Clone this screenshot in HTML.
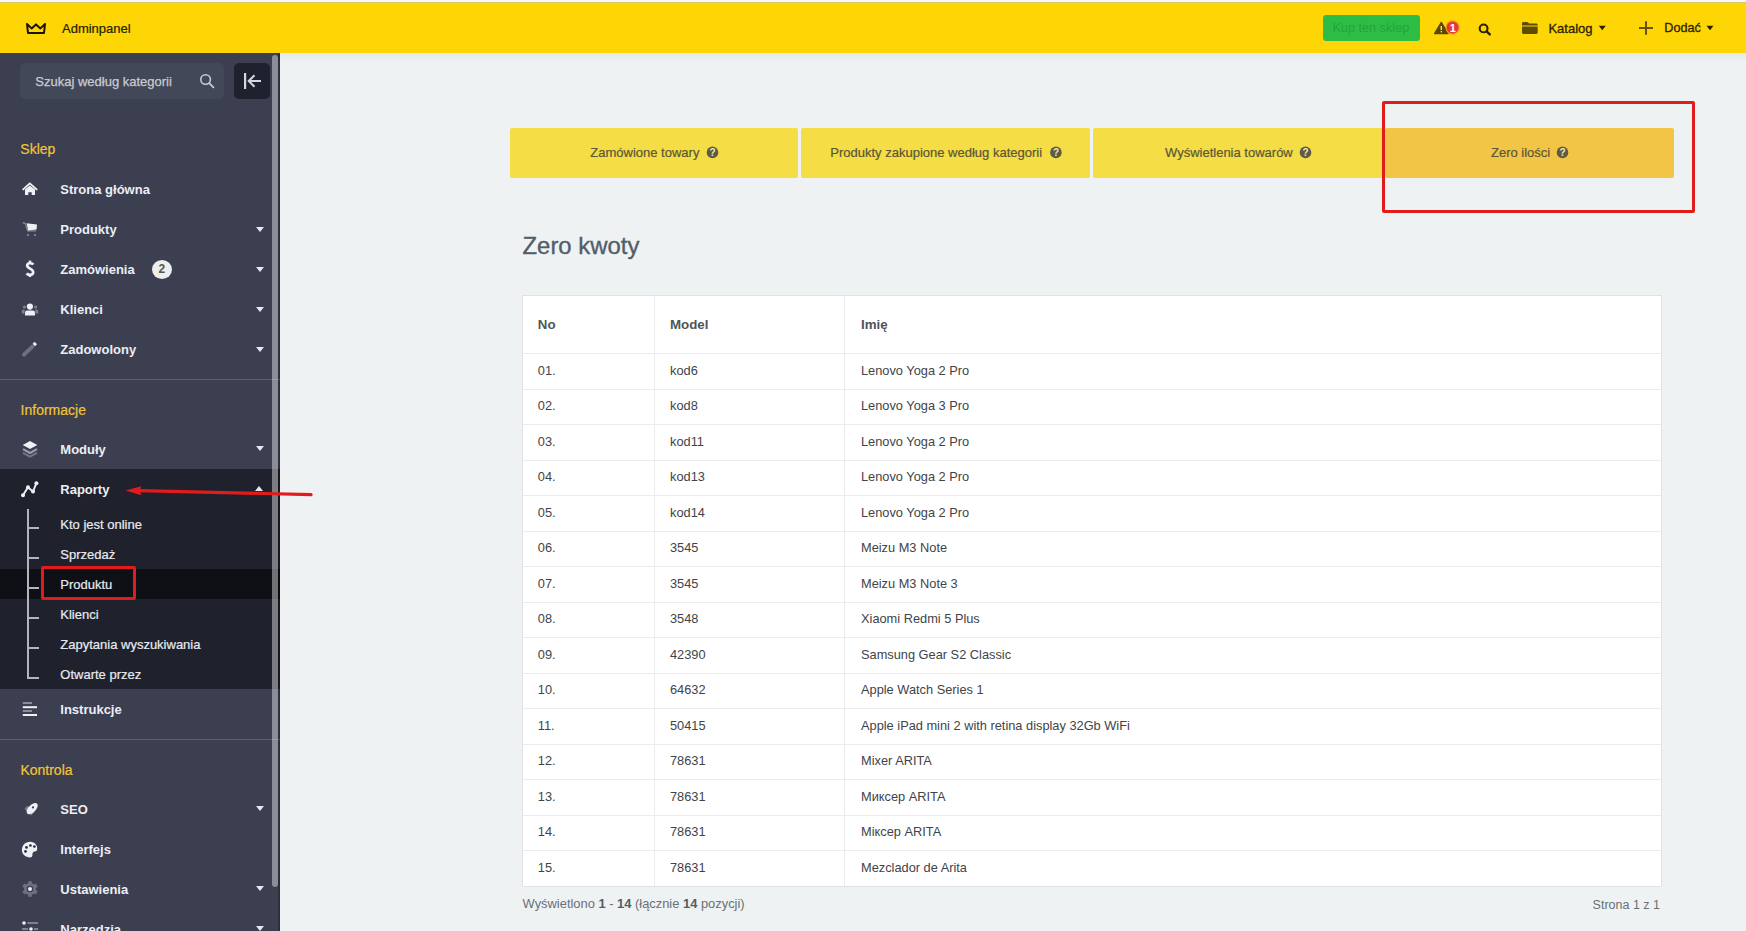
<!DOCTYPE html>
<html><head><meta charset="utf-8">
<style>
*{box-sizing:border-box;margin:0;padding:0}
html,body{width:1746px;height:931px;overflow:hidden;background:#eef2f3;font-family:"Liberation Sans",sans-serif}
body{position:relative}
.a{position:absolute;white-space:nowrap;line-height:1}
.r{position:absolute}
.caret{position:absolute;width:0;height:0;border-left:4.5px solid transparent;border-right:4.5px solid transparent;border-top:5px solid #e6e8ee}
.caretu{position:absolute;width:0;height:0;border-left:4.5px solid transparent;border-right:4.5px solid transparent;border-bottom:5px solid #e6e8ee}
svg{position:absolute;overflow:visible}
</style></head><body>
<div class="r" style="left:0;top:0;width:1746px;height:2px;background:#f9f9f3"></div>
<div class="r" style="left:0;top:2px;width:1746px;height:1px;background:#dac870"></div>
<div class="r" style="left:0;top:3px;width:1746px;height:50px;background:#fed605"></div>
<svg style="left:0;top:0" width="60" height="50"><path d="M27 24 L31.6 28.4 L36 24.4 L40.4 28.4 L45 24 L44 32.9 L28 32.9 Z" fill="none" stroke="#1d1400" stroke-width="2" stroke-linejoin="round"/></svg>
<div class="a" style="left:62px;top:21.60px;font-size:13px;color:#241c00;font-weight:normal;-webkit-text-stroke:0.2px #241c00">Adminpanel</div>
<div class="r" style="left:1323px;top:15px;width:97px;height:25.5px;background:#2dbd45;border-radius:3px"></div>
<div class="a" style="left:1332.4px;top:21.55px;font-size:12.7px;color:#26a23c;font-weight:normal;">Kup ten sklep</div>
<svg style="left:0;top:0" width="1746" height="53">
<path d="M1441.3 22.3 L1448.2 33.6 L1434.5 33.6 Z" fill="#5a4800" stroke="#5a4800" stroke-width="1.2" stroke-linejoin="round"/>
<rect x="1440.6" y="26" width="1.4" height="4" fill="#f6e27a"/><rect x="1440.6" y="31" width="1.4" height="1.4" fill="#f6e27a"/>
<circle cx="1452.6" cy="27.5" r="7.2" fill="#f59f1c"/>
<circle cx="1452.6" cy="27.5" r="6" fill="#e5373a"/>
<text x="1452.8" y="31.6" font-family="Liberation Sans" font-size="11" font-weight="bold" fill="#fff" text-anchor="middle">1</text>
<circle cx="1483.6" cy="28.4" r="3.9" fill="none" stroke="#2a2100" stroke-width="2.1"/>
<line x1="1486.6" y1="31.4" x2="1489.8" y2="34.4" stroke="#2a2100" stroke-width="2.4" stroke-linecap="round"/>
<path d="M1522 23.4 Q1522 22 1523.4 22 H1527.6 L1529.2 23.6 H1536.3 Q1537.7 23.6 1537.7 25 V25.6 H1522 Z" fill="#5f4c00"/>
<path d="M1522 26.4 H1537.7 V32.6 Q1537.7 34 1536.3 34 H1523.4 Q1522 34 1522 32.6 Z" fill="#5f4c00"/>
<path d="M1598.8 25.8 H1605.8 L1602.3 30.2 Z" fill="#2a2100"/>
<line x1="1639" y1="28" x2="1653" y2="28" stroke="#5f4c00" stroke-width="1.9"/>
<line x1="1646" y1="21.3" x2="1646" y2="34.7" stroke="#5f4c00" stroke-width="1.9"/>
<path d="M1706.5 25.8 H1713.5 L1710 30.2 Z" fill="#2a2100"/>
</svg>
<div class="a" style="left:1548.4px;top:21.70px;font-size:13px;color:#2a2100;font-weight:normal;-webkit-text-stroke:0.3px #2a2100">Katalog</div>
<div class="a" style="left:1664.3px;top:22.03px;font-size:12.6px;color:#2a2100;font-weight:normal;-webkit-text-stroke:0.3px #2a2100">Dodać</div>
<div class="r" style="left:280px;top:53px;width:1466px;height:10px;background:linear-gradient(rgba(0,0,0,0.035),rgba(0,0,0,0))"></div>
<div class="r" style="left:0;top:53px;width:280px;height:878px;background:#3b3f50"></div>
<div class="r" style="left:0;top:469px;width:280px;height:220px;background:#1f222d"></div>
<div class="r" style="left:0;top:569px;width:280px;height:30px;background:#0e1016"></div>
<div class="r" style="left:278px;top:53px;width:2px;height:878px;background:rgba(0,0,0,0.25)"></div>
<div class="r" style="left:272px;top:55px;width:6px;height:832px;background:rgba(255,255,255,0.41);border-radius:3px"></div>
<div class="r" style="left:0;top:379px;width:280px;height:1px;background:rgba(255,255,255,0.17)"></div>
<div class="r" style="left:0;top:739px;width:280px;height:1px;background:rgba(255,255,255,0.17)"></div>
<div class="r" style="left:20px;top:63px;width:204px;height:36px;background:#434859;border-radius:5px"></div>
<div class="a" style="left:35.3px;top:75.20px;font-size:13px;color:#c8cbd3;font-weight:normal;-webkit-text-stroke:0.25px #c8cbd3">Szukaj według kategorii</div>
<div class="r" style="left:234px;top:63px;width:36px;height:36px;background:#1e212e;border-radius:5px"></div>
<svg style="left:0;top:0" width="280" height="931">
<circle cx="205.6" cy="79.5" r="4.8" fill="none" stroke="#c8cad2" stroke-width="1.6"/>
<line x1="209.2" y1="83.1" x2="213.4" y2="87.3" stroke="#c8cad2" stroke-width="1.8" stroke-linecap="round"/>
<rect x="244" y="73" width="2.2" height="16" fill="#d6d8df"/>
<line x1="248.5" y1="81" x2="261" y2="81" stroke="#d6d8df" stroke-width="2"/>
<path d="M254.5 75.2 L248.7 81 L254.5 86.8" fill="none" stroke="#d6d8df" stroke-width="2"/>
</svg>
<div class="a" style="left:20.3px;top:142.05px;font-size:14px;color:#f0c53c;font-weight:normal;-webkit-text-stroke:0.2px #f0c53c">Sklep</div>
<div class="a" style="left:60.3px;top:183.30px;font-size:13px;color:#eceef5;font-weight:bold;">Strona główna</div>
<div class="a" style="left:60.3px;top:223.30px;font-size:13px;color:#eceef5;font-weight:bold;">Produkty</div>
<div class="caret" style="left:256px;top:226.5px"></div>
<div class="a" style="left:60.3px;top:263.30px;font-size:13px;color:#eceef5;font-weight:bold;">Zamówienia</div>
<div class="caret" style="left:256px;top:266.5px"></div>
<div class="a" style="left:60.3px;top:303.30px;font-size:13px;color:#eceef5;font-weight:bold;">Klienci</div>
<div class="caret" style="left:256px;top:306.5px"></div>
<div class="a" style="left:60.3px;top:343.30px;font-size:13px;color:#eceef5;font-weight:bold;">Zadowolony</div>
<div class="caret" style="left:256px;top:346.5px"></div>
<div class="a" style="left:60.3px;top:443.20px;font-size:13px;color:#eceef5;font-weight:bold;">Moduły</div>
<div class="caret" style="left:256px;top:446.4px"></div>
<div class="a" style="left:60.3px;top:483.40px;font-size:13px;color:#eceef5;font-weight:bold;">Raporty</div>
<div class="a" style="left:60.3px;top:702.60px;font-size:13px;color:#eceef5;font-weight:bold;">Instrukcje</div>
<div class="a" style="left:60.3px;top:803.20px;font-size:13px;color:#eceef5;font-weight:bold;">SEO</div>
<div class="caret" style="left:256px;top:806.4px"></div>
<div class="a" style="left:60.3px;top:843.20px;font-size:13px;color:#eceef5;font-weight:bold;">Interfejs</div>
<div class="a" style="left:60.3px;top:883.20px;font-size:13px;color:#eceef5;font-weight:bold;">Ustawienia</div>
<div class="caret" style="left:256px;top:886.4px"></div>
<div class="a" style="left:60.3px;top:923.20px;font-size:13px;color:#eceef5;font-weight:bold;">Narzędzia</div>
<div class="caret" style="left:256px;top:926.4px"></div>
<div class="caretu" style="left:255px;top:486px"></div>
<div class="a" style="left:20.6px;top:403.25px;font-size:14px;color:#f0c53c;font-weight:normal;-webkit-text-stroke:0.2px #f0c53c">Informacje</div>
<div class="a" style="left:20.4px;top:763.05px;font-size:14px;color:#f0c53c;font-weight:normal;-webkit-text-stroke:0.2px #f0c53c">Kontrola</div>
<div class="r" style="left:152px;top:259.5px;width:20px;height:19px;border-radius:50%;background:#eeeeee"></div>
<div class="a" style="left:158.6px;top:263.44px;font-size:12px;color:#555555;font-weight:bold;">2</div>
<div class="a" style="left:60.3px;top:517.90px;font-size:13px;color:#e8eaf0;font-weight:normal;-webkit-text-stroke:0.2px #e8eaf0">Kto jest online</div>
<div class="r" style="left:29px;top:527px;width:10px;height:2px;background:#b3b6c0"></div>
<div class="a" style="left:60.3px;top:547.90px;font-size:13px;color:#e8eaf0;font-weight:normal;-webkit-text-stroke:0.2px #e8eaf0">Sprzedaż</div>
<div class="r" style="left:29px;top:557px;width:10px;height:2px;background:#b3b6c0"></div>
<div class="a" style="left:60.3px;top:577.90px;font-size:13px;color:#e8eaf0;font-weight:normal;-webkit-text-stroke:0.2px #e8eaf0">Produktu</div>
<div class="r" style="left:29px;top:587px;width:10px;height:2px;background:#b3b6c0"></div>
<div class="a" style="left:60.3px;top:607.90px;font-size:13px;color:#e8eaf0;font-weight:normal;-webkit-text-stroke:0.2px #e8eaf0">Klienci</div>
<div class="r" style="left:29px;top:617px;width:10px;height:2px;background:#b3b6c0"></div>
<div class="a" style="left:60.3px;top:637.90px;font-size:13px;color:#e8eaf0;font-weight:normal;-webkit-text-stroke:0.2px #e8eaf0">Zapytania wyszukiwania</div>
<div class="r" style="left:29px;top:647px;width:10px;height:2px;background:#b3b6c0"></div>
<div class="a" style="left:60.3px;top:667.90px;font-size:13px;color:#e8eaf0;font-weight:normal;-webkit-text-stroke:0.2px #e8eaf0">Otwarte przez</div>
<div class="r" style="left:29px;top:677px;width:10px;height:2px;background:#b3b6c0"></div>
<div class="r" style="left:27px;top:509px;width:2px;height:170px;background:#b3b6c0"></div>
<div class="r" style="left:41px;top:566px;width:95px;height:33.5px;border:3px solid #e11c1c;border-radius:2px"></div>
<svg style="left:0;top:0" width="280" height="931">
<path d="M23.2 189.4 L29.8 183.4 L36.6 189.4" fill="none" stroke="#f0f1f6" stroke-width="1.9" stroke-linecap="round" stroke-linejoin="round"/>
<path d="M25 189.6 L29.8 185.6 L35 189.6 V195 H31.7 V192.2 H28.3 V195 H25 Z" fill="#f0f1f6"/>
<path d="M22.6 222.6 L25.2 223.3 L27.6 230.8 H36" fill="none" stroke="#8a8e9c" stroke-width="1.2"/>
<path d="M26.6 223.2 L37 224.4 L36.6 229.6 L28.2 230.4 Z" fill="#eef0f6"/>
<circle cx="28" cy="235" r="1.1" fill="#8a8e9c"/><circle cx="35" cy="235" r="1.1" fill="#8a8e9c"/>
<path d="M33.2 264.6 C32.4 262.9 27.2 262.4 27.2 265.6 C27.2 268.9 33.2 268.4 33.2 272.2 C33.2 275.5 28 275.3 26.6 273.4" fill="none" stroke="#eef0f6" stroke-width="2.7"/>
<line x1="30" y1="260.6" x2="30" y2="263.6" stroke="#eef0f6" stroke-width="2.5"/>
<line x1="30" y1="274" x2="30" y2="277" stroke="#eef0f6" stroke-width="2.5"/>
<circle cx="29.9" cy="306.6" r="3.1" fill="#eef0f6"/>
<path d="M25 315.6 V312.6 Q25 310.6 27 310.6 H33 Q35 310.6 35 312.6 V315.6 Z" fill="#eef0f6"/>
<circle cx="24.4" cy="307" r="1.6" fill="#7d8190"/><circle cx="35.6" cy="307" r="1.6" fill="#7d8190"/>
<path d="M21.8 313.4 V311.4 Q21.8 309.6 23.6 309.6 H24.6 V313.4 Z" fill="#7d8190"/>
<path d="M38.2 313.4 V311.4 Q38.2 309.6 36.4 309.6 H35.4 V313.4 Z" fill="#7d8190"/>
<line x1="24" y1="354.6" x2="32.4" y2="346.6" stroke="#6c7080" stroke-width="4" stroke-linecap="round"/>
<path d="M32.6 343.8 L34.6 341.8 L37 344.2 L35 346.2 Z" fill="#eef0f6"/>
<path d="M22.7 445 L30 441 L37.3 445 L30 449 Z" fill="#eef0f6"/>
<path d="M23 449.2 L30 453 L37 449.2" fill="none" stroke="#9a9dab" stroke-width="2"/>
<path d="M23 452.8 L30 456.6 L37 452.8" fill="none" stroke="#737786" stroke-width="2"/>
<polyline points="23,495.3 28,487.2 33,491.6 36.4,483.2" fill="none" stroke="#eef0f6" stroke-width="1.9"/>
<circle cx="23" cy="495.3" r="2" fill="#eef0f6"/><circle cx="28" cy="487.2" r="2" fill="#eef0f6"/><circle cx="33" cy="491.6" r="2" fill="#eef0f6"/><circle cx="36.4" cy="483.2" r="2" fill="#eef0f6"/>
<rect x="22.8" y="702" width="9.2" height="2" fill="#8a8e9c"/>
<rect x="22.8" y="706.2" width="14.2" height="2" fill="#eef0f6"/>
<rect x="22.8" y="710" width="9.2" height="2" fill="#8a8e9c"/>
<rect x="22.8" y="714" width="14.2" height="2" fill="#eef0f6"/>
<path d="M24.6 808.6 L27.6 805.8 L29.6 807.6 L26.4 811 Z" fill="#7d8190"/>
<path d="M29.6 813.6 L32.4 810.6 L34.2 812.6 L31 815.6 Z" fill="#7d8190"/>
<ellipse cx="32.2" cy="808.6" rx="7" ry="3.6" transform="rotate(-45 32.2 808.6)" fill="#eef0f6"/>
<circle cx="33" cy="807.4" r="1.1" fill="#3b3f50"/>
<path d="M36.8 850.8 C38.6 846 35 841.8 30 841.8 C25.6 841.8 21.9 845.4 21.9 849.8 C21.9 854.4 25.6 857.4 30 857.4 C31.6 857.4 32.4 856.4 32.4 855.2 C32.4 853.2 32.6 851.4 35 851.4 Z" fill="#eef0f6"/>
<circle cx="26.5" cy="847.4" r="1.35" fill="#2a2d3a"/><circle cx="30.4" cy="845.5" r="1.35" fill="#2a2d3a"/><circle cx="34.4" cy="846.5" r="1.35" fill="#2a2d3a"/><circle cx="25.5" cy="851.4" r="1.35" fill="#2a2d3a"/>
<g transform="translate(30 889)">
<circle r="6" fill="#6d7180"/>
<rect x="-1.8" y="-7.8" width="3.6" height="15.6" fill="#6d7180"/>
<rect x="-1.8" y="-7.8" width="3.6" height="15.6" fill="#6d7180" transform="rotate(60)"/>
<rect x="-1.8" y="-7.8" width="3.6" height="15.6" fill="#6d7180" transform="rotate(120)"/>
<circle r="3.3" fill="#3b3f50"/><circle r="2" fill="#eef0f6"/>
</g>
<circle cx="24" cy="923" r="1.8" fill="#eef0f6"/><rect x="27.5" y="922" width="10.5" height="2" fill="#7d8190"/>
<rect x="22" y="928" width="6" height="2" fill="#7d8190"/><circle cx="31" cy="929" r="1.8" fill="#eef0f6"/><rect x="34" y="928" width="4" height="2" fill="#7d8190"/>
</svg>
<svg style="left:0;top:0" width="330" height="931">
<line x1="139" y1="490.6" x2="311" y2="494.6" stroke="#e31b1b" stroke-width="3.2" stroke-linecap="round"/>
<path d="M125.6 490.5 L141.4 486.2 L139.8 490.7 L141.4 495.2 Z" fill="#e31b1b"/>
</svg>
<div class="r" style="left:510px;top:128px;width:288px;height:50px;background:#f4dd45;border-radius:2px"></div>
<div class="a" style="left:590.3px;top:145.50px;font-size:13px;color:#5a5638;font-weight:normal;-webkit-text-stroke:0.2px #5a5638">Zamówione towary</div>
<svg style="left:0;top:0" width="1746" height="200"><circle cx="712.5" cy="152.4" r="5.8" fill="#5d5a46"/><text x="712.6" y="156.1" font-family="Liberation Sans" font-size="10" font-weight="bold" fill="#f6e7ad" text-anchor="middle">?</text></svg>
<div class="r" style="left:801px;top:128px;width:289px;height:50px;background:#f4dd45;border-radius:2px"></div>
<div class="a" style="left:830.3px;top:145.50px;font-size:13px;color:#5a5638;font-weight:normal;-webkit-text-stroke:0.2px #5a5638">Produkty zakupione według kategorii</div>
<svg style="left:0;top:0" width="1746" height="200"><circle cx="1055.9" cy="152.4" r="5.8" fill="#5d5a46"/><text x="1056.0" y="156.1" font-family="Liberation Sans" font-size="10" font-weight="bold" fill="#f6e7ad" text-anchor="middle">?</text></svg>
<div class="r" style="left:1093px;top:128px;width:292px;height:50px;background:#f4dd45;border-radius:2px"></div>
<div class="a" style="left:1165px;top:145.50px;font-size:13px;color:#5a5638;font-weight:normal;-webkit-text-stroke:0.2px #5a5638">Wyświetlenia towarów</div>
<svg style="left:0;top:0" width="1746" height="200"><circle cx="1305.5" cy="152.4" r="5.8" fill="#5d5a46"/><text x="1305.6" y="156.1" font-family="Liberation Sans" font-size="10" font-weight="bold" fill="#f6e7ad" text-anchor="middle">?</text></svg>
<div class="r" style="left:1385px;top:128px;width:289px;height:50px;background:#f3c546;border-radius:2px"></div>
<div class="a" style="left:1491px;top:145.50px;font-size:13px;color:#5a5638;font-weight:normal;-webkit-text-stroke:0.2px #5a5638">Zero ilości</div>
<svg style="left:0;top:0" width="1746" height="200"><circle cx="1562.5" cy="152.4" r="5.8" fill="#5d5a46"/><text x="1562.6" y="156.1" font-family="Liberation Sans" font-size="10" font-weight="bold" fill="#f6e7ad" text-anchor="middle">?</text></svg>
<div class="r" style="left:1382px;top:101px;width:313px;height:112px;border:3px solid #e11c1c;border-radius:2px"></div>
<div class="a" style="left:522.5px;top:233.57px;font-size:23.9px;color:#535d69;font-weight:normal;-webkit-text-stroke:0.35px #535d69">Zero kwoty</div>
<div class="r" style="left:522px;top:295px;width:1140px;height:592px;background:#fff;border:1px solid #e0e3e6"></div>
<div class="r" style="left:654px;top:296px;width:1px;height:590px;background:#e9ecee"></div>
<div class="r" style="left:844px;top:296px;width:1px;height:590px;background:#e9ecee"></div>
<div class="a" style="left:537.8px;top:317.74px;font-size:13.3px;color:#4f555b;font-weight:bold;">No</div>
<div class="a" style="left:670px;top:317.74px;font-size:13.3px;color:#4f555b;font-weight:bold;">Model</div>
<div class="a" style="left:861px;top:317.74px;font-size:13.3px;color:#4f555b;font-weight:bold;">Imię</div>
<div class="r" style="left:523px;top:353px;width:1138px;height:1px;background:#eaedef"></div>
<div class="a" style="left:537.8px;top:364.96px;font-size:12.8px;color:#3f4448;font-weight:normal;">01.</div>
<div class="a" style="left:670px;top:364.96px;font-size:12.8px;color:#3f4448;font-weight:normal;">kod6</div>
<div class="a" style="left:861px;top:364.96px;font-size:12.8px;color:#3f4448;font-weight:normal;">Lenovo Yoga 2 Pro</div>
<div class="r" style="left:523px;top:389px;width:1138px;height:1px;background:#eaedef"></div>
<div class="a" style="left:537.8px;top:400.46px;font-size:12.8px;color:#3f4448;font-weight:normal;">02.</div>
<div class="a" style="left:670px;top:400.46px;font-size:12.8px;color:#3f4448;font-weight:normal;">kod8</div>
<div class="a" style="left:861px;top:400.46px;font-size:12.8px;color:#3f4448;font-weight:normal;">Lenovo Yoga 3 Pro</div>
<div class="r" style="left:523px;top:424px;width:1138px;height:1px;background:#eaedef"></div>
<div class="a" style="left:537.8px;top:435.96px;font-size:12.8px;color:#3f4448;font-weight:normal;">03.</div>
<div class="a" style="left:670px;top:435.96px;font-size:12.8px;color:#3f4448;font-weight:normal;">kod11</div>
<div class="a" style="left:861px;top:435.96px;font-size:12.8px;color:#3f4448;font-weight:normal;">Lenovo Yoga 2 Pro</div>
<div class="r" style="left:523px;top:460px;width:1138px;height:1px;background:#eaedef"></div>
<div class="a" style="left:537.8px;top:471.46px;font-size:12.8px;color:#3f4448;font-weight:normal;">04.</div>
<div class="a" style="left:670px;top:471.46px;font-size:12.8px;color:#3f4448;font-weight:normal;">kod13</div>
<div class="a" style="left:861px;top:471.46px;font-size:12.8px;color:#3f4448;font-weight:normal;">Lenovo Yoga 2 Pro</div>
<div class="r" style="left:523px;top:495px;width:1138px;height:1px;background:#eaedef"></div>
<div class="a" style="left:537.8px;top:506.96px;font-size:12.8px;color:#3f4448;font-weight:normal;">05.</div>
<div class="a" style="left:670px;top:506.96px;font-size:12.8px;color:#3f4448;font-weight:normal;">kod14</div>
<div class="a" style="left:861px;top:506.96px;font-size:12.8px;color:#3f4448;font-weight:normal;">Lenovo Yoga 2 Pro</div>
<div class="r" style="left:523px;top:531px;width:1138px;height:1px;background:#eaedef"></div>
<div class="a" style="left:537.8px;top:542.46px;font-size:12.8px;color:#3f4448;font-weight:normal;">06.</div>
<div class="a" style="left:670px;top:542.46px;font-size:12.8px;color:#3f4448;font-weight:normal;">3545</div>
<div class="a" style="left:861px;top:542.46px;font-size:12.8px;color:#3f4448;font-weight:normal;">Meizu M3 Note</div>
<div class="r" style="left:523px;top:566px;width:1138px;height:1px;background:#eaedef"></div>
<div class="a" style="left:537.8px;top:577.96px;font-size:12.8px;color:#3f4448;font-weight:normal;">07.</div>
<div class="a" style="left:670px;top:577.96px;font-size:12.8px;color:#3f4448;font-weight:normal;">3545</div>
<div class="a" style="left:861px;top:577.96px;font-size:12.8px;color:#3f4448;font-weight:normal;">Meizu M3 Note 3</div>
<div class="r" style="left:523px;top:602px;width:1138px;height:1px;background:#eaedef"></div>
<div class="a" style="left:537.8px;top:613.46px;font-size:12.8px;color:#3f4448;font-weight:normal;">08.</div>
<div class="a" style="left:670px;top:613.46px;font-size:12.8px;color:#3f4448;font-weight:normal;">3548</div>
<div class="a" style="left:861px;top:613.46px;font-size:12.8px;color:#3f4448;font-weight:normal;">Xiaomi Redmi 5 Plus</div>
<div class="r" style="left:523px;top:637px;width:1138px;height:1px;background:#eaedef"></div>
<div class="a" style="left:537.8px;top:648.96px;font-size:12.8px;color:#3f4448;font-weight:normal;">09.</div>
<div class="a" style="left:670px;top:648.96px;font-size:12.8px;color:#3f4448;font-weight:normal;">42390</div>
<div class="a" style="left:861px;top:648.96px;font-size:12.8px;color:#3f4448;font-weight:normal;">Samsung Gear S2 Classic</div>
<div class="r" style="left:523px;top:673px;width:1138px;height:1px;background:#eaedef"></div>
<div class="a" style="left:537.8px;top:684.46px;font-size:12.8px;color:#3f4448;font-weight:normal;">10.</div>
<div class="a" style="left:670px;top:684.46px;font-size:12.8px;color:#3f4448;font-weight:normal;">64632</div>
<div class="a" style="left:861px;top:684.46px;font-size:12.8px;color:#3f4448;font-weight:normal;">Apple Watch Series 1</div>
<div class="r" style="left:523px;top:708px;width:1138px;height:1px;background:#eaedef"></div>
<div class="a" style="left:537.8px;top:719.96px;font-size:12.8px;color:#3f4448;font-weight:normal;">11.</div>
<div class="a" style="left:670px;top:719.96px;font-size:12.8px;color:#3f4448;font-weight:normal;">50415</div>
<div class="a" style="left:861px;top:719.96px;font-size:12.8px;color:#3f4448;font-weight:normal;">Apple iPad mini 2 with retina display 32Gb WiFi</div>
<div class="r" style="left:523px;top:744px;width:1138px;height:1px;background:#eaedef"></div>
<div class="a" style="left:537.8px;top:755.46px;font-size:12.8px;color:#3f4448;font-weight:normal;">12.</div>
<div class="a" style="left:670px;top:755.46px;font-size:12.8px;color:#3f4448;font-weight:normal;">78631</div>
<div class="a" style="left:861px;top:755.46px;font-size:12.8px;color:#3f4448;font-weight:normal;">Mixer ARITA</div>
<div class="r" style="left:523px;top:779px;width:1138px;height:1px;background:#eaedef"></div>
<div class="a" style="left:537.8px;top:790.96px;font-size:12.8px;color:#3f4448;font-weight:normal;">13.</div>
<div class="a" style="left:670px;top:790.96px;font-size:12.8px;color:#3f4448;font-weight:normal;">78631</div>
<div class="a" style="left:861px;top:790.96px;font-size:12.8px;color:#3f4448;font-weight:normal;">Миксер ARITA</div>
<div class="r" style="left:523px;top:815px;width:1138px;height:1px;background:#eaedef"></div>
<div class="a" style="left:537.8px;top:826.46px;font-size:12.8px;color:#3f4448;font-weight:normal;">14.</div>
<div class="a" style="left:670px;top:826.46px;font-size:12.8px;color:#3f4448;font-weight:normal;">78631</div>
<div class="a" style="left:861px;top:826.46px;font-size:12.8px;color:#3f4448;font-weight:normal;">Міксер ARITA</div>
<div class="r" style="left:523px;top:850px;width:1138px;height:1px;background:#eaedef"></div>
<div class="a" style="left:537.8px;top:861.96px;font-size:12.8px;color:#3f4448;font-weight:normal;">15.</div>
<div class="a" style="left:670px;top:861.96px;font-size:12.8px;color:#3f4448;font-weight:normal;">78631</div>
<div class="a" style="left:861px;top:861.96px;font-size:12.8px;color:#3f4448;font-weight:normal;">Mezclador de Arita</div>
<div class="a" style="left:522.6px;top:898.48px;font-size:12.9px;color:#6a7077;font-weight:normal;">Wyświetlono <b style="color:#555c63">1</b> - <b style="color:#555c63">14</b> (łącznie <b style="color:#555c63">14</b> pozycji)</div>
<div class="a" style="right:86px;top:898.82px;font-size:12.5px;color:#6a7077">Strona 1 z 1</div>
</body></html>
